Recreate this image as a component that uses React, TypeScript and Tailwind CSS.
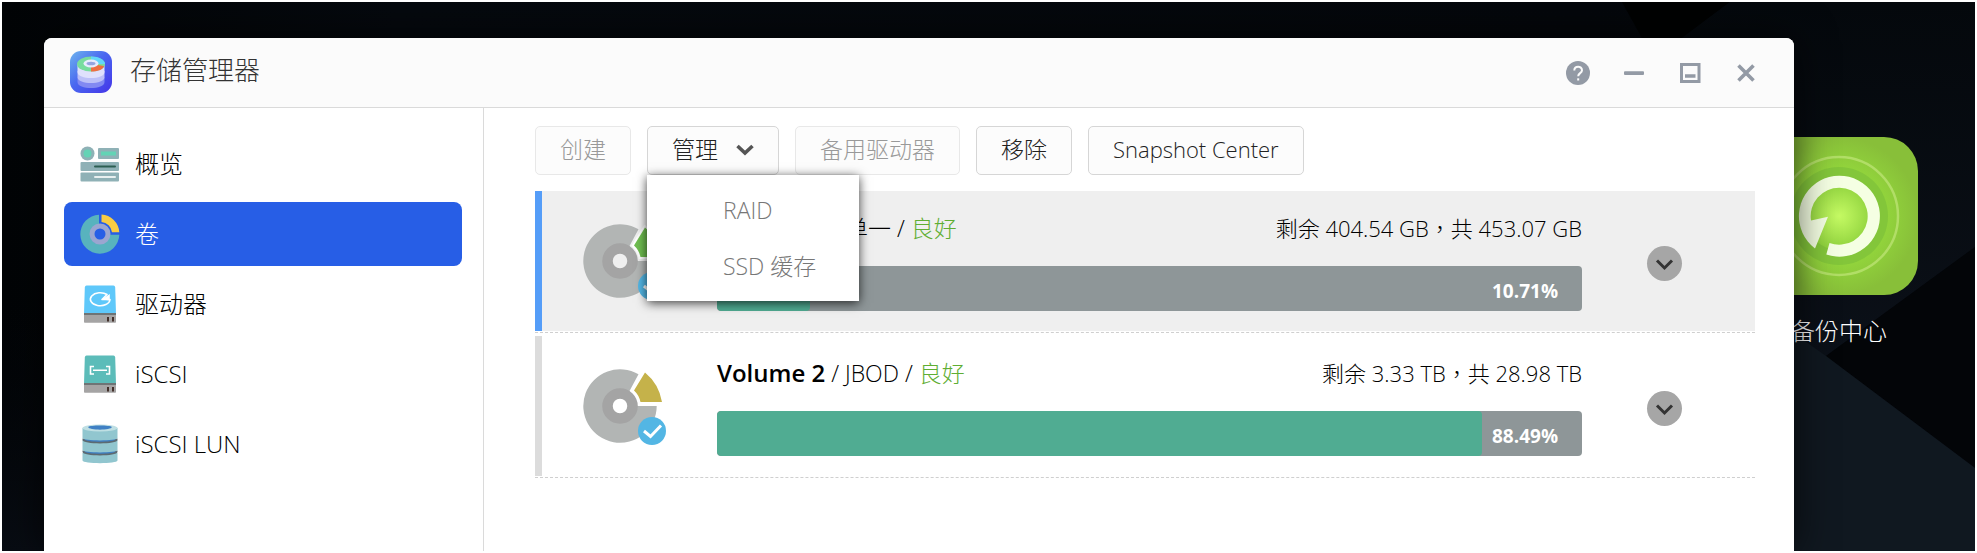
import type { ReactNode } from 'react';
import { clsx } from 'clsx';

const FONT = "font-['Open_Sans','Noto_Sans_CJK_TC',sans-serif]";

function Wallpaper() {
  return (
    <svg
      className="absolute inset-0 h-full w-full"
      viewBox="0 0 1973 549"
      preserveAspectRatio="xMaxYMin slice"
      aria-hidden="true"
    >
      <defs>
        <linearGradient id="wall" x1="0" y1="0" x2="1" y2="0">
          <stop offset="0" stopColor="#020406" />
          <stop offset=".2" stopColor="#05090e" />
          <stop offset=".8" stopColor="#04070b" />
          <stop offset="1" stopColor="#05080e" />
        </linearGradient>
        <linearGradient id="facet" x1="0" y1="0" x2="0" y2="1">
          <stop offset="0" stopColor="#04080c" />
          <stop offset="1" stopColor="#0b1018" />
        </linearGradient>
        <linearGradient id="edge" x1="0" y1="0" x2="0" y2="1">
          <stop offset="0" stopColor="#04070b" stopOpacity="0" />
          <stop offset="1" stopColor="#080c13" />
        </linearGradient>
      </defs>
      <rect width="1973" height="549" fill="url(#wall)" />
      <path d="M0 300H42V549H0z" fill="url(#edge)" />
      <path d="M1620 0H1728L1680 36H1640z" fill="#010202" />
      <path d="M1728 0H1973V245L1824 354L1790 340V36H1680z" fill="url(#facet)" />
      <path d="M1973 245V466L1824 354z" fill="#030508" />
      <path d="M1790 330L1824 354L1973 466V549H1790z" fill="#101820" />
    </svg>
  );
}

function AppLogo() {
  return (
    <svg className="size-[42px]" viewBox="0 0 42 42" aria-hidden="true">
      <defs>
        <linearGradient id="logo-bg" x1="0" y1="0" x2="1" y2="1">
          <stop offset="0" stopColor="#6db4ee" />
          <stop offset=".45" stopColor="#4a68f0" />
          <stop offset="1" stopColor="#4434e8" />
        </linearGradient>
      </defs>
      <rect width="42" height="42" rx="11" fill="url(#logo-bg)" />
      <path d="M7.500 26v5c0 8 27 8 27 0v-5z" fill="#8289f2" />
      <path d="M7.500 20v6c0 8 27 8 27 0v-6z" fill="#bcc0f8" />
      <path d="M7.500 13v8c0 8 27 8 27 0v-8z" fill="#dfe1fc" />
      <ellipse cx="21" cy="13" rx="14" ry="7.500" fill="#78dd9e" />
      <path d="M21 13V5.500c8 0 14 3.500 14 7.500z" fill="#62d6fa" />
      <path d="M21 13v7.500c6.500 0 12-1.500 13-5.500z" fill="#ee6f42" />
      <ellipse cx="21" cy="12.500" rx="7.500" ry="4" fill="#e8ecfd" />
      <ellipse cx="21" cy="12.500" rx="4.500" ry="1.800" fill="#95a5de" />
    </svg>
  );
}

function OverviewIcon() {
  return (
    <svg viewBox="0 0 40 40">
      <circle cx="7.500" cy="9.500" r="7" fill="#8fb1b6" />
      <circle cx="7.500" cy="9.500" r="4" fill="#63d3b5" />
      <rect x="18" y="4" width="21" height="11" rx="1" fill="#8fb1b6" />
      <rect x="21" y="7.500" width="15" height="4" fill="#63d3b5" />
      <rect x=".5" y="18" width="38.500" height="9" rx="1" fill="#8fb1b6" />
      <rect x="14" y="21.500" width="22" height="2" rx="1" fill="#2c5f52" />
      <rect x=".5" y="28.500" width="38.500" height="9" rx="1" fill="#8fb1b6" />
      <rect x="14" y="32" width="22" height="2" rx="1" fill="#e8f0f0" />
    </svg>
  );
}

function VolumeIcon() {
  return (
    <svg viewBox="0 0 40 40">
      <path d="M19 .7A19.500 19.500 0 1 0 39.300 20.700H29A9.500 9.500 0 1 1 19 11z" fill="#58b3be" />
      <path d="M21.500.6A19 19 0 0 1 39.300 18.300H32A11.500 11.500 0 0 0 21.500 8z" fill="#f8cc45" />
      <circle cx="20" cy="20" r="8" fill="none" stroke="#9ba6d0" strokeWidth="5" />
    </svg>
  );
}

function DriveIcon({ color, children }: { color: string; children: ReactNode }) {
  return (
    <svg viewBox="0 0 40 40">
      <path d="M6.500 1.500h27q1.500 0 1.700 2L36 30H4L4.800 3.500q.2-2 1.700-2z" fill={color} />
      <rect x="4" y="29" width="32" height="2" fill="#6f7475" />
      <path d="M4 31h32v7q0 .8-.8.800H4.800q-.8 0-.8-.8z" fill="#a5a4a4" />
      <path d="M27 33h2v4.500h-2zM32 33h2v4.500h-2z" fill="#43302a" />
      <g fill="none" stroke="#fff" strokeWidth="1.600">
        {children}
      </g>
    </svg>
  );
}

function LunIcon() {
  return (
    <svg viewBox="0 0 40 40">
      <path d="M2.500 29v7.500c0 3.500 35 3.500 35 0V29z" fill="#91c6cf" />
      <path d="M2.500 26.500v1.500c0 4.500 35 4.500 35 0v-1.500z" fill="#5c6a72" />
      <path d="M4.500 25v2c0 3.700 31 3.700 31 0v-2z" fill="#3f80c4" />
      <path d="M2.500 16v10c0 3.200 35 3.200 35 0V16z" fill="#91c6cf" />
      <path d="M2.500 14.500v1.500c0 4.500 35 4.500 35 0v-1.500z" fill="#5c6a72" />
      <path d="M4.500 13v2c0 3.700 31 3.700 31 0v-2z" fill="#3f80c4" />
      <path d="M2.500 4v10c0 3.200 35 3.200 35 0V4z" fill="#91c6cf" />
      <ellipse cx="20" cy="4" rx="17.500" ry="3.500" fill="#bfdfe3" />
      <path d="M8 3c2-2 22-2 24 0-1 3.500-23 3.500-24 0z" fill="#3f80c4" />
    </svg>
  );
}

const NAV: { label: string; icon: ReactNode; active?: boolean }[] = [
  { label: '概览', icon: <OverviewIcon /> },
  { label: '卷', icon: <VolumeIcon />, active: true },
  {
    label: '驱动器',
    icon: (
      <DriveIcon color="#5fc8fa">
        <path d="M22 15.500h8a9.800 6.500 0 1 1-3-5z" strokeLinejoin="round" />
        <path d="M24 15l5-3.500v4z" fill="#fff" />
      </DriveIcon>
    ),
  },
  {
    label: 'iSCSI',
    icon: (
      <DriveIcon color="#5cbcb9">
        <path d="M14 12.500h-3.500v7.500H14M26 12.500h3.500v7.500H26M13 16.300h14" />
      </DriveIcon>
    ),
  },
  { label: 'iSCSI LUN', icon: <LunIcon /> },
];

function Sidebar() {
  return (
    <nav className="flex w-[440px] shrink-0 flex-col gap-1.5 border-r border-[#dadada] py-6 pl-5 pr-[21px]">
      {NAV.map(({ label, icon, active }) => (
        <a
          key={label}
          href="#"
          aria-current={active ? 'page' : undefined}
          className={clsx(
            'flex h-16 items-center gap-[15px] rounded-lg pl-4 text-2xl',
            active ? 'bg-[#275ee6] text-white' : 'text-black',
          )}
        >
          <span className="size-10">{icon}</span>
          {label}
        </a>
      ))}
    </nav>
  );
}

function TitleBar() {
  return (
    <header className="flex h-[70px] shrink-0 items-center justify-between rounded-t-lg border-b border-[#dadada] bg-[#fbfbfb] pl-[26px] pr-9">
      <div className="flex items-center gap-[18px] pb-0.5">
        <AppLogo />
        <h1 className="pb-1 text-[26px] leading-8 text-[#333]">存储管理器</h1>
      </div>
      <div className="flex gap-8 text-[#939aa5]">
        <button type="button" aria-label="帮助" className="size-6">
          <svg viewBox="0 0 24 24">
            <circle cx="12" cy="12" r="12" fill="currentColor" />
            <g fill="none" stroke="#fbfbfb" strokeWidth="2">
              <path d="M8.300 9.500c0-5 7.700-4.800 7.700-.3 0 3-3.800 2.800-3.800 6" />
              <path d="M12.200 17.300v2.200" />
            </g>
          </svg>
        </button>
        <button type="button" aria-label="最小化" className="size-6">
          <svg viewBox="0 0 24 24">
            <rect x="2" y="10.300" width="20" height="3.600" rx="1" fill="currentColor" />
          </svg>
        </button>
        <button type="button" aria-label="最大化" className="size-6">
          <svg viewBox="0 0 24 24" fill="none" stroke="currentColor">
            <rect x="3.500" y="3.500" width="17.500" height="17" strokeWidth="3" />
            <path d="M7 15h10.500" strokeWidth="3.500" />
          </svg>
        </button>
        <button type="button" aria-label="关闭" className="size-6">
          <svg viewBox="0 0 24 24" stroke="currentColor" strokeWidth="3.600">
            <path d="M4.500 4.500l15 15M19.500 4.500l-15 15" />
          </svg>
        </button>
      </div>
    </header>
  );
}

const BUTTON =
  'flex h-[49px] items-center rounded-[5px] border border-[#d6d6d6] bg-[#fcfcfc] px-6 pb-0.5 text-[23px] text-[#222] disabled:border-[#e8e8e8] disabled:text-[#999]';

function ManageMenu() {
  return (
    <div className="relative">
      <button type="button" aria-haspopup="menu" aria-expanded="true" className={clsx(BUTTON, 'gap-[18px]')}>
        管理
        <svg className="w-[18px]" viewBox="0 0 18 12" fill="none" stroke="#555" strokeWidth="3.600">
          <path d="M1.500 2L9 9l7.500-7" />
        </svg>
      </button>
      <div
        role="menu"
        className="absolute left-0 top-full z-10 flex w-[212px] flex-col bg-white py-[7px] text-[23px] text-[#777] shadow-[0_2px_10px_rgba(0,0,0,0.75)]"
      >
        <button type="button" role="menuitem" className="h-14 pl-[76px] text-left">
          RAID
        </button>
        <button type="button" role="menuitem" className="h-14 pl-[76px] text-left">
          SSD 缓存
        </button>
      </div>
    </div>
  );
}

function Toolbar() {
  return (
    <div className="flex gap-4">
      <button type="button" disabled className={BUTTON}>
        创建
      </button>
      <ManageMenu />
      <button type="button" disabled className={BUTTON}>
        备用驱动器
      </button>
      <button type="button" className={BUTTON}>
        移除
      </button>
      <button type="button" className={BUTTON}>
        <span className="text-[22px]">Snapshot Center</span>
      </button>
    </div>
  );
}

function DiscIcon({ slice }: { slice: string }) {
  return (
    <svg className="size-[84px] shrink-0" viewBox="-38 -42 84 84" aria-hidden="true">
      <path
        d="M36.700 0A36.700 36.700 0 1 1 18.500-31.700L9.500-15L17.500 0zM-12 0a12 12 0 1 0 24 0a12 12 0 1 0-24 0z"
        fill="#b2b5b4"
        fillRule="evenodd"
      />
      <circle r="12.500" fill="none" stroke="#a4a4a4" strokeWidth="10.500" />
      <path
        d="M25-33.500Q39-22 42-4H20.500Q19-11 14-15.500z"
        fill={slice}
        stroke="#fff"
        strokeWidth="4"
        paintOrder="stroke"
      />
      <circle cx="32" cy="25" r="14" fill="#53b6e4" />
      <path d="M24 25l6.500 5.500L41 19.500" fill="none" stroke="#fff" strokeWidth="3" />
    </svg>
  );
}

type Volume = {
  name: string;
  level: string;
  free: string;
  total: string;
  used: number;
  slice: string;
  selected?: boolean;
};

const VOLUMES: Volume[] = [
  { name: 'Volume 1', level: '单一', free: '404.54 GB', total: '453.07 GB', used: 10.71, slice: '#6fbe50', selected: true },
  { name: 'Volume 2', level: 'JBOD', free: '3.33 TB', total: '28.98 TB', used: 88.49, slice: '#c5b24a' },
];

function VolumeRow({ volume }: { volume: Volume }) {
  return (
    <li className="border-b border-dashed border-[#cfcfcf] pb-px">
      <div
        className={clsx(
          'flex h-[140px] items-center border-l-[7px] pl-10 pr-[73px]',
          volume.selected ? 'border-[#559df8] bg-[#efefef]' : 'border-[#dcdcdc]',
        )}
      >
        <DiscIcon slice={volume.slice} />
        <div className="ml-[51px] mr-[65px] min-w-0 flex-1">
          <div className="flex items-center justify-between text-[22px] leading-8 text-black">
            <h2 className="text-[23px]">
              <span className="text-2xl leading-8 font-semibold">{volume.name}</span> / {volume.level} /{' '}
              <span className="text-[#5fae33]">良好</span>
            </h2>
            <p>
              剩余 {volume.free}，共 {volume.total}
            </p>
          </div>
          <div className="relative mt-[22px] flex h-[45px] items-center justify-end overflow-hidden rounded bg-[#8e9698] pr-6">
            <div
              className="absolute inset-y-0 left-0 rounded bg-[#50ac92]"
              style={{ width: `${volume.used}%` }}
            />
            <span className="relative pt-1.5 text-[19px] font-bold text-white">{volume.used}%</span>
          </div>
        </div>
        <button type="button" aria-label="展开" className="mt-1 size-[35px] shrink-0 rounded-full bg-[#a6a6a6]">
          <svg viewBox="0 0 35 35" fill="none" stroke="#333" strokeWidth="3">
            <path d="M10 14.500l7.500 7.500 7.500-7.500" />
          </svg>
        </button>
      </div>
    </li>
  );
}

function BackupShortcut() {
  return (
    <a href="#" className="flex w-[158px] flex-col items-center gap-5">
      <svg className="size-[158px]" viewBox="-79 -79 158 158" aria-hidden="true">
        <defs>
          <radialGradient id="tile">
            <stop offset=".6" stopColor="#92d43c" />
            <stop offset="1" stopColor="#88bf39" />
          </radialGradient>
          <radialGradient id="glow">
            <stop offset="0" stopColor="#c6fb64" />
            <stop offset="1" stopColor="#8fd23d" />
          </radialGradient>
        </defs>
        <rect x="-79" y="-79" width="158" height="158" rx="34" fill="url(#tile)" />
        <circle r="59" fill="none" stroke="#b1de66" strokeWidth="2.500" />
        <circle r="49" fill="#83c63a" />
        <circle r="34" fill="url(#glow)" />
        <path
          d="M-12.700 38.500A40.500 40.500 0 1 0-24 32.500L-11 .7L-28 4.500A28.500 28.500 0 1 1-9.500 27z"
          fill="#f5ffe3"
        />
      </svg>
      <span className="whitespace-nowrap text-2xl text-white">备份中心</span>
    </a>
  );
}

export default function App() {
  return (
    <div className={clsx('flex min-h-screen bg-white p-0.5 font-light', FONT)}>
      <div className="relative flex flex-1 overflow-hidden pl-[42px] pt-9">
        <Wallpaper />
        <main className="relative z-10 flex min-w-0 flex-1 flex-col rounded-t-lg bg-white shadow-[0_0_40px_rgba(0,0,0,0.7)]">
          <TitleBar />
          <div className="flex flex-1">
            <Sidebar />
            <section className="min-w-0 flex-1 pl-[51px] pr-[39px] pt-[18px]">
              <Toolbar />
              <ul className="mt-4 flex flex-col gap-[3px]">
                {VOLUMES.map((volume) => (
                  <VolumeRow key={volume.name} volume={volume} />
                ))}
              </ul>
            </section>
          </div>
        </main>
        <aside className="relative -ml-[34px] w-[215px] shrink-0 pt-[99px]">
          <BackupShortcut />
        </aside>
      </div>
    </div>
  );
}
